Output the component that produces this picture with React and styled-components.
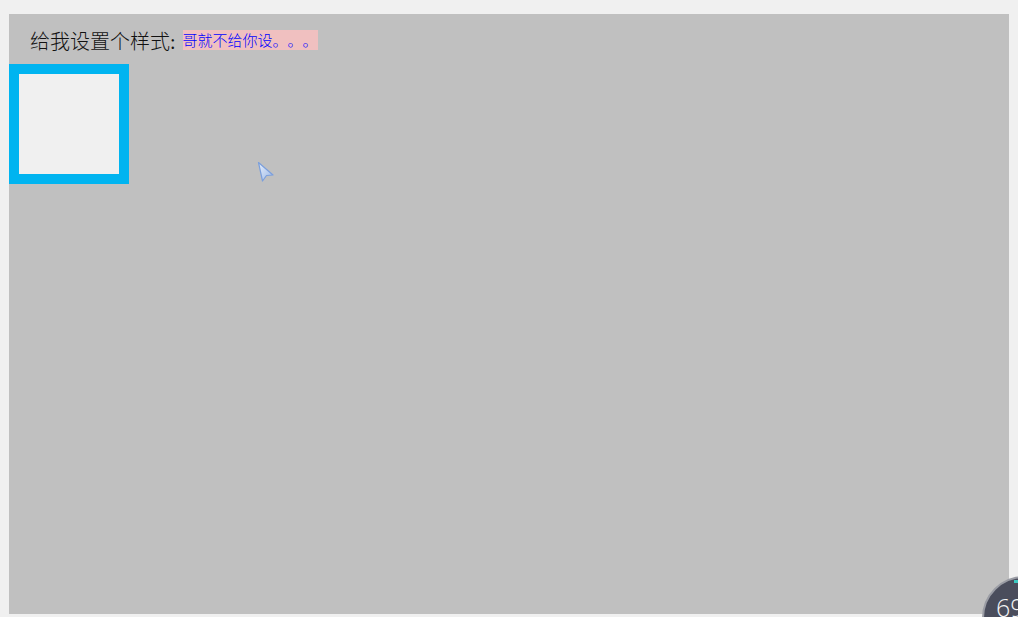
import React from "react";
import styled, { createGlobalStyle } from "styled-components";

const Global = createGlobalStyle`
  html, body { margin: 0; padding: 0; background: #f0f0f0; overflow: hidden; }
  body { width: 1018px; height: 617px; text-spacing-trim: space-all; }
`;

const Page = styled.div`
  padding: 14px 0 0 9px;
`;

const Stage = styled.div`
  width: 1000px;
  height: 600px;
  background: #c0c0c0;
  position: relative;
`;

const Header = styled.div`
  height: 50px;
  display: flex;
  align-items: center;
  padding: 2px 0 0 21px;
  box-sizing: border-box;
  font-family: "Liberation Serif", "Noto Sans CJK SC", serif;
  font-size: 20px;
  font-weight: 300;
  color: #111;
`;

const Label = styled.span`
  margin-right: 7px;
  text-spacing-trim: space-all;
`;

const Tag = styled.span`
  display: inline-block;
  height: 20px;
  line-height: 20px;
  width: 135px;
  background: #f0c0c0;
  color: #0000ff;
  font-family: "Noto Sans CJK SC", sans-serif;
  font-size: 15px;
  font-weight: 300;
  white-space: nowrap;
  overflow: hidden;
  text-spacing-trim: space-all;
`;

const Box = styled.div`
  width: 100px;
  height: 100px;
  border: 10px solid #00b4f0;
  background: #f0f0f0;
`;

const Cursor = styled.svg`
  position: absolute;
  left: 248px;
  top: 147px;
`;

const Widget = styled.div`
  position: fixed;
  left: 982px;
  top: 576px;
  width: 84px;
  height: 84px;
  border-radius: 50%;
  background: #4a4d5c;
  border: 2px solid #9a9ca4;
  box-sizing: border-box;
  overflow: hidden;
`;

const WidgetNum = styled.span`
  position: absolute;
  left: 12px;
  top: 14px;
  color: #f4f4f4;
  font-family: "Open Sans", sans-serif;
  font-weight: 300;
  font-size: 25px;
  line-height: 30px;
`;

const WidgetMark = styled.span`
  position: absolute;
  left: 30px;
  top: 2px;
  width: 8px;
  height: 3px;
  background: #3cc8c0;
`;

export default function App() {
  return (
    <>
      <Global />
      <Page>
        <Stage>
          <Header>
            <Label>给我设置个样式:</Label>
            <Tag>哥就不给你设。。。</Tag>
          </Header>
          <Box />
          <Cursor width="20" height="24" viewBox="0 0 20 24">
            <defs>
              <linearGradient id="cg" x1="0" y1="0" x2="1" y2="1">
                <stop offset="0" stopColor="#e8f0fc" />
                <stop offset="1" stopColor="#9ab6e6" />
              </linearGradient>
            </defs>
            <path
              d="M1.5 1.5 L16 14 L9.5 14.5 L5.5 20 Z"
              fill="url(#cg)"
              stroke="#7b9fdc"
              strokeWidth="1.2"
              strokeLinejoin="round"
            />
          </Cursor>
        </Stage>
      </Page>
      <Widget>
        <WidgetMark />
        <WidgetNum>69</WidgetNum>
      </Widget>
    </>
  );
}
